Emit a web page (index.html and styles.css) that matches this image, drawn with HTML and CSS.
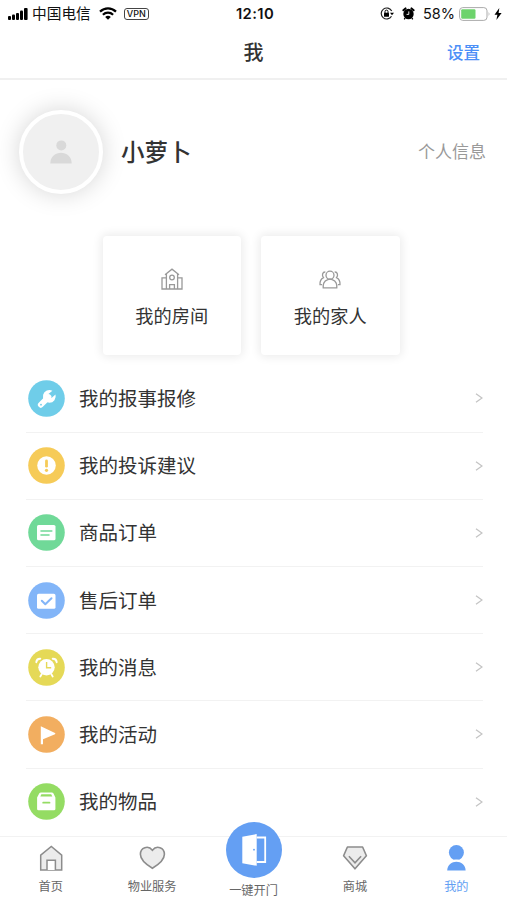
FILE: index.html
```html
<!DOCTYPE html>
<html lang="zh-CN">
<head>
    <meta charset="UTF-8">
    <meta name="viewport" content="width=device-width, initial-scale=1.0">
    <title>我</title>
    <link rel="stylesheet" href="styles.css">
</head>
<body>
    <div class="page">
        <!-- Status bar -->
        <div class="status-bar">
            <div class="status-left">
                <svg class="signal" width="20" height="12" viewBox="0 0 20 12">
                    <rect x="0" y="8" width="3" height="4" rx="1"/>
                    <rect x="4" y="6.5" width="3" height="5.5" rx="1"/>
                    <rect x="8" y="5" width="3" height="7" rx="1"/>
                    <rect x="12" y="2.5" width="3" height="9.5" rx="1"/>
                    <rect x="16" y="0" width="3.6" height="12" rx="1"/>
                </svg>
                <span class="carrier">中国电信</span>
                <svg class="wifi" width="18" height="13" viewBox="0 0 18 13">
                    <path d="M1 4.6C5.6 0.2 12.4 0.2 17 4.6M3.9 7.7C6.8 4.9 11.2 4.9 14.1 7.7" fill="none" stroke="#000" stroke-width="2.2"/>
                    <path d="M9 12.8L6.2 9.9C7.8 8.5 10.2 8.5 11.8 9.9Z"/>
                </svg>
                <span class="vpn">VPN</span>
            </div>
            <div class="status-time">12:10</div>
            <div class="status-right">
                <svg class="lock" width="14" height="13" viewBox="0 0 14 13">
                    <path d="M11.7 4.1A5.5 5.5 0 1 0 11.5 9.3" fill="none" stroke="#222" stroke-width="1.2"/>
                    <path d="M10 5.7H14L12 8.2Z"/>
                    <rect x="4" y="5.7" width="5" height="4" rx="0.5"/>
                    <path d="M5 6V4.6A1.5 1.5 0 0 1 8 4.6V6" fill="none" stroke="#000"/>
                </svg>
                <svg class="alarm" width="13" height="13" viewBox="0 0 13 13">
                    <circle cx="6.5" cy="7" r="5.2"/>
                    <path d="M1.4 3.3L3.5 1.4M11.6 3.3L9.5 1.4" stroke="#000" stroke-width="2" stroke-linecap="round"/>
                    <path d="M3 11L2.3 12.3M10 11L10.7 12.3" stroke="#000" stroke-width="1.4"/>
                    <path d="M6.8 4.4V7.4H4.6" fill="none" stroke="#fff" stroke-width="0.9"/>
                </svg>
                <span class="percent">58%</span>
                <svg class="battery" width="32" height="14" viewBox="0 0 32 14">
                    <rect x="0.6" y="0.6" width="27.4" height="12.8" rx="3.2" fill="#fff" stroke="#aaa"/>
                    <rect x="2.2" y="2.2" width="14.3" height="9.6" rx="1.2" fill="#6dd36c"/>
                    <path d="M29.6 4.8Q31.4 7 29.6 9.2Z" fill="#aaa"/>
                </svg>
                <svg class="bolt" width="8" height="12" viewBox="0 0 8 12">
                    <path d="M5.3 0L0.5 6.7H3.4L2.4 12L7.6 4.9H4.6Z"/>
                </svg>
            </div>
        </div>

        <div class="header">
            <h1>我</h1>
            <a class="settings" href="#">设置</a>
        </div>

        <div class="profile">
            <div class="avatar">
                <svg width="22" height="24" viewBox="0 0 22 24" fill="#d9d9d9">
                    <circle cx="11.3" cy="5.4" r="5"/>
                    <path d="M0.3 23.5C0.3 9.3 21.7 9.3 21.7 23.5Z"/>
                </svg>
            </div>
            <h2>小萝卜</h2>
            <a class="profile-link" href="#">个人信息</a>
        </div>

        <div class="cards">
            <a class="card" href="#">
                <svg width="24" height="24" viewBox="0 0 24 24" fill="none" stroke="#999" stroke-width="1.3">
                    <path d="M6.4 22V6.6M17.6 22V6.6M5 7.8L12 2.2L19 7.8"/>
                    <path d="M6.4 10.8H2V22H22V10.8H17.6M9.6 22V17.6H14.4V22"/>
                    <circle cx="12" cy="10.5" r="2.3"/>
                </svg>
                <span>我的房间</span>
            </a>
            <a class="card" href="#">
                <svg width="24" height="24" viewBox="0 0 24 24" fill="none" stroke="#999" stroke-width="1.3">
                    <circle cx="12" cy="8.2" r="4"/>
                    <path d="M5.2 20.8C4.8 16.8 6.3 14 9.3 12.8Q12 11.6 14.7 12.8C17.7 14 19.2 16.8 18.8 20.8Z"/>
                    <path d="M7.3 5C4.4 4.9 3.6 8.4 5.5 10.7C3 12 1.8 14.6 2 17.6H4M16.7 5C19.6 4.9 20.4 8.4 18.5 10.7C21 12 22.2 14.6 22 17.6H20"/>
                </svg>
                <span>我的家人</span>
            </a>
        </div>

        <div class="menu">
            <a class="menu-item" href="#">
                <svg class="menu-icon" viewBox="0 0 37 37">
                    <circle cx="18.5" cy="18.5" r="18.3" fill="#6fcde9"/>
                    <path d="M12.8 24.8L20.5 17.1" stroke="#fff" stroke-width="5.8" stroke-linecap="round"/>
                    <path d="M24.4 10.7A6.4 6.4 0 1 0 27.5 14.6L23.5 18L20.2 17.3L19.8 14.4Z" fill="#fff"/>
                    <circle cx="13" cy="24.7" r="0.9" fill="#6fcde9"/>
                </svg>
                <span>我的报事报修</span>
                <svg class="arrow" viewBox="0 0 8 12"><path d="M1 1.7L7 6L1 10.3"/></svg>
            </a>
            <a class="menu-item" href="#">
                <svg class="menu-icon" viewBox="0 0 37 37">
                    <circle cx="18.5" cy="18.5" r="18.3" fill="#f6cb58"/>
                    <circle cx="18.5" cy="18.5" r="9.3" fill="#fff"/>
                    <path d="M18.5 13.9V19.2" stroke="#f6cb58" stroke-width="2.8" stroke-linecap="round"/>
                    <circle cx="18.5" cy="23.3" r="1.6" fill="#f6cb58"/>
                </svg>
                <span>我的投诉建议</span>
                <svg class="arrow" viewBox="0 0 8 12"><path d="M1 1.7L7 6L1 10.3"/></svg>
            </a>
            <a class="menu-item" href="#">
                <svg class="menu-icon" viewBox="0 0 37 37">
                    <circle cx="18.5" cy="18.5" r="18.3" fill="#70d998"/>
                    <rect x="9" y="11" width="18.5" height="15.3" rx="1.6" fill="#fff"/>
                    <path d="M13 17H23.8M13 21H21" stroke="#70d998" stroke-width="1.6" stroke-linecap="round"/>
                </svg>
                <span>商品订单</span>
                <svg class="arrow" viewBox="0 0 8 12"><path d="M1 1.7L7 6L1 10.3"/></svg>
            </a>
            <a class="menu-item" href="#">
                <svg class="menu-icon" viewBox="0 0 37 37">
                    <circle cx="18.5" cy="18.5" r="18.3" fill="#82b5f8"/>
                    <rect x="9" y="11.8" width="18.5" height="15" rx="1.6" fill="#fff"/>
                    <path d="M13.8 18.8L17.3 22.3L23.5 16.3" fill="none" stroke="#82b5f8" stroke-width="2" stroke-linecap="round" stroke-linejoin="round"/>
                </svg>
                <span>售后订单</span>
                <svg class="arrow" viewBox="0 0 8 12"><path d="M1 1.7L7 6L1 10.3"/></svg>
            </a>
            <a class="menu-item" href="#">
                <svg class="menu-icon" viewBox="0 0 37 37">
                    <circle cx="18.5" cy="18.5" r="18.3" fill="#e5d957"/>
                    <circle cx="18.5" cy="18.2" r="8.2" fill="#fff"/>
                    <path d="M13.8 25L12.3 27.5M23.2 25L24.7 27.5" stroke="#fff" stroke-width="1.8" stroke-linecap="round"/>
                    <path d="M8.3 13.2C8.5 10.8 10 9.7 12.3 9.8M28.7 13.2C28.5 10.8 27 9.7 24.7 9.8" fill="none" stroke="#fff" stroke-width="1.9" stroke-linecap="round"/>
                    <path d="M18.6 13V18.7H23.2" fill="none" stroke="#e5d957" stroke-width="1.4"/>
                </svg>
                <span>我的消息</span>
                <svg class="arrow" viewBox="0 0 8 12"><path d="M1 1.7L7 6L1 10.3"/></svg>
            </a>
            <a class="menu-item" href="#">
                <svg class="menu-icon" viewBox="0 0 37 37">
                    <circle cx="18.5" cy="18.5" r="18.3" fill="#f2ae60"/>
                    <path d="M12.8 10.3L27 17Q27.8 17.6 27 18.2L15 23.3V28.3H12.8Z" fill="#fff"/>
                </svg>
                <span>我的活动</span>
                <svg class="arrow" viewBox="0 0 8 12"><path d="M1 1.7L7 6L1 10.3"/></svg>
            </a>
            <a class="menu-item" href="#">
                <svg class="menu-icon" viewBox="0 0 37 37">
                    <circle cx="18.5" cy="18.5" r="18.3" fill="#94dc63"/>
                    <path d="M13 9.4H23.8Q25 9.4 25.5 10.5L27.4 14.5V26Q27.4 27.3 26 27.3H10.5Q9.1 27.3 9.1 26V14.5L11.2 10.5Q11.7 9.4 13 9.4Z" fill="#fff"/>
                    <path d="M12.3 13.5L13.4 11.3H23.2L24.3 13.5Z" fill="#94dc63"/>
                    <path d="M15.2 19.7H21.5" stroke="#94dc63" stroke-width="1.8" stroke-linecap="round"/>
                </svg>
                <span>我的物品</span>
                <svg class="arrow" viewBox="0 0 8 12"><path d="M1 1.7L7 6L1 10.3"/></svg>
            </a>
        </div>

        <!-- Bottom tabs -->
        <div class="tab-bar">
            <a class="tab" href="#">
                <svg width="28" height="28" viewBox="0 0 28 28" fill="#ececec" stroke="#8c8c8c" stroke-width="1.5">
                    <path d="M3.7 26V11.2L14.3 2.5L24.7 11.2V26Z"/>
                    <path d="M10 26V16.3H18.4V26" fill="#fff"/>
                </svg>
                <span>首页</span>
            </a>
            <a class="tab" href="#">
                <svg width="28" height="28" viewBox="0 0 28 28" fill="#ececec" stroke="#8c8c8c" stroke-width="1.6">
                    <path d="M14.4 24.2C10.4 21.8 2.4 16.7 2.4 10.2C2.4 3.6 10.2 0.8 14.4 6.2C18.6 0.8 26.4 3.6 26.4 10.2C26.4 16.7 18.4 21.8 14.4 24.2Z"/>
                </svg>
                <span>物业服务</span>
            </a>
            <a class="tab tab-door" href="#">
                <svg width="56" height="56" viewBox="0 0 56 56">
                    <circle cx="28" cy="28" r="28" fill="#649ff3"/>
                    <path d="M16.3 14.8L30.7 12V43.8L16.3 41.2Z" fill="#fff"/>
                    <path d="M30.7 15.5H39.2V40H30.7" fill="none" stroke="#fff" stroke-width="1.8"/>
                    <circle cx="28" cy="27.7" r="0.9" fill="#649ff3"/>
                </svg>
                <span>一键开门</span>
            </a>
            <a class="tab" href="#">
                <svg width="28" height="28" viewBox="0 0 28 28" fill="#ececec" stroke="#8c8c8c" stroke-width="1.6">
                    <path d="M6.4 3H21.6L25.4 11.7L14 24.8L2.6 11.7Z" stroke-linejoin="round"/>
                    <path d="M7.9 12.2L14 18.8L20.1 12.2" fill="none"/>
                </svg>
                <span>商城</span>
            </a>
            <a class="tab active" href="#">
                <svg width="28" height="28" viewBox="0 0 28 28" fill="#649ff3">
                    <circle cx="14.4" cy="8.6" r="7.5"/>
                    <path d="M5.2 26.5C5.4 14.9 23.4 14.9 23.6 26.5Z"/>
                    <path d="M8.5 16.9Q14.4 14.7 20.3 16.9" fill="none" stroke="#fff" stroke-width="0.8"/>
                </svg>
                <span>我的</span>
            </a>
        </div>
    </div>
</body>
</html>
```

FILE: styles.css
```css
* {
    box-sizing: border-box;
}
body {
    margin: 0;
    font-family: "Liberation Sans", "Noto Sans CJK SC", sans-serif;
    background-color: #fff;
    color: #333;
}
a {
    color: inherit;
    text-decoration: none;
}
svg {
    display: block;
    flex-shrink: 0;
}
.page {
    display: flex;
    flex-direction: column;
    height: 900px;
    overflow: hidden;
}

/* Status bar */
.status-bar {
    display: grid;
    grid-template-columns: 1fr auto 1fr;
    align-items: center;
    height: 27px;
    padding: 0 5px 0 8px;
    color: #111;
    flex-shrink: 0;
}
.status-left,
.status-right {
    display: flex;
    align-items: center;
}
.status-right {
    justify-content: flex-end;
}
.carrier {
    margin-left: 4px;
    font-size: 14.7px;
    line-height: 20px;
}
.wifi {
    margin-left: 8px;
}
.vpn {
    margin-left: 7px;
    width: 25px;
    height: 12px;
    border: 1px solid #444;
    border-radius: 3px;
    font-family: Inter, sans-serif;
    font-size: 9px;
    font-weight: 500;
    line-height: 10px;
    text-align: center;
}
.status-time {
    font-family: Inter, sans-serif;
    font-size: 14.8px;
    font-weight: 600;
    letter-spacing: 0.4px;
}
.alarm {
    margin-left: 8px;
}
.percent {
    margin: 0 4px 0 8px;
    font-family: Inter, sans-serif;
    font-size: 14.5px;
}
.bolt {
    margin-left: 3px;
}

/* Header */
.header {
    display: grid;
    grid-template-columns: 1fr auto 1fr;
    align-items: center;
    height: 53px;
    padding: 0 27px;
    border-bottom: 2px solid #f0f0f0;
    flex-shrink: 0;
}
.header h1 {
    grid-column: 2;
    margin: 0;
    font-size: 20px;
    font-weight: 500;
    line-height: 28px;
}
.settings {
    justify-self: end;
    padding-bottom: 2px;
    color: #4c8ff7;
    font-size: 16.5px;
    font-weight: 500;
}

/* Profile */
.profile {
    display: flex;
    align-items: center;
    height: 144px;
    padding: 0 21px 0 19px;
    flex-shrink: 0;
}
.avatar {
    display: flex;
    align-items: center;
    justify-content: center;
    width: 84px;
    height: 84px;
    border: 4px solid #fff;
    border-radius: 50%;
    background-color: #f0f0f0;
    box-shadow: 0 0 24px rgba(0, 0, 0, 0.17);
}
.profile h2 {
    margin: 0 0 0 18px;
    padding-bottom: 3px;
    font-size: 23.5px;
    font-weight: 500;
}
.profile-link {
    margin-left: auto;
    padding-bottom: 3px;
    color: #999;
    font-size: 17px;
}

/* Cards */
.cards {
    display: flex;
    justify-content: center;
    gap: 20px;
    padding: 12px 5px 0 0;
    height: 141.4px;
    flex-shrink: 0;
}
.card {
    display: flex;
    flex-direction: column;
    align-items: center;
    width: 138.5px;
    height: 119px;
    padding-top: 31px;
    border-radius: 4px;
    box-shadow: 0 0 10px 2px rgba(0, 0, 0, 0.08);
    font-size: 18.2px;
}
.card span {
    margin-top: 13px;
    line-height: 27px;
}

/* Menu */
.menu {
    flex: 1;
    min-height: 0;
    padding: 0 24px 0 26px;
    overflow: hidden;
}
.menu-item {
    display: flex;
    align-items: center;
    height: 67.2px;
    padding-left: 2px;
    border-bottom: 1px solid #f2f2f2;
    font-size: 19.5px;
}
.menu-item:last-child {
    border-bottom-color: transparent;
}
.menu-item span {
    padding-bottom: 2px;
}
.menu-icon {
    width: 37px;
    height: 37px;
    margin-right: 14px;
}
.arrow {
    width: 8px;
    height: 12px;
    margin-left: auto;
    fill: none;
    stroke: #c4c4c4;
    stroke-width: 1.3;
}

/* Tab bar */
.tab-bar {
    display: flex;
    height: 64px;
    border-top: 1px solid #f2f2f2;
    background-color: #fff;
    flex-shrink: 0;
}
.tab {
    display: flex;
    flex: 1;
    flex-direction: column;
    align-items: center;
    padding-top: 7px;
    color: #666;
    font-size: 12.2px;
}
.tab span {
    margin-top: 6px;
    line-height: 18px;
}
.tab-door {
    margin-top: -15px;
    padding-top: 0;
}
.tab-door span {
    margin-top: 4px;
}
.tab.active {
    color: #649ff3;
}
```
